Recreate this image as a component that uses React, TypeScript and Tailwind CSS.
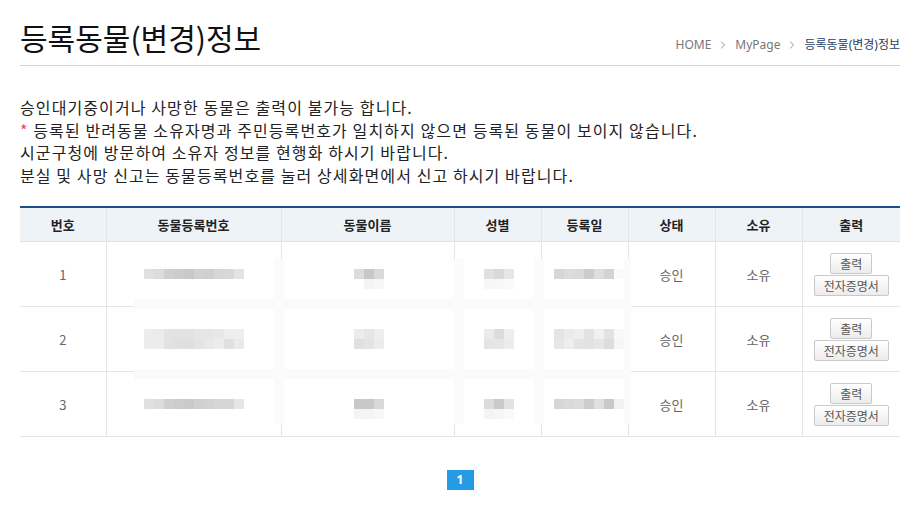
import { ChevronRight } from "lucide-react";

type Row = { no: number; status: string; owner: string };

const rows: Row[] = [
  { no: 1, status: "승인", owner: "소유" },
  { no: 2, status: "승인", owner: "소유" },
  { no: 3, status: "승인", owner: "소유" },
];

const headers = ["번호", "동물등록번호", "동물이름", "성별", "등록일", "상태", "소유", "출력"];

// mosaic that hides personal data (positions relative to the blur patch)
const blurBlocks: { x: number; y: number; cells: string[][] }[] = [
  { x: 10, y: 10, cells: [["#e0e0e0", "#dcdcdc", "#cfcfcf", "#cccccc", "#c8c8c8", "#d1d1d1", "#cfcfcf", "#d6d6d6", "#d8d8d8", "#e4e4e4"]] },
  { x: 220, y: 10, cells: [["#dcdcdc", "#c8c8c8", "#dadada"], ["#ffffff", "#f4f4f4", "#f6f6f6"]] },
  { x: 350, y: 10, cells: [["#e0e0e0", "#d9d9d9", "#e6e6e6"], ["#f7f7f7", "#f8f8f8", "#fafafa"]] },
  { x: 420, y: 10, cells: [["#d6d6d6", "#dcdcdc", "#dadada", "#cdcdcd", "#dedede", "#d3d3d3", "#fafafa"]] },

  {
    x: 10,
    y: 70,
    cells: [
      ["#ececec", "#ebebeb", "#e3e3e3", "#e2e2e2", "#e2e2e2", "#e6e6e6", "#e6e6e6", "#e8e8e8", "#eeeeee", "#eeeeee"],
      ["#ededed", "#ececec", "#e2e2e2", "#e0e0e0", "#dfdfdf", "#e4e4e4", "#e9e9e9", "#ececec", "#e0e0e0", "#eaeaea"],
    ],
  },
  { x: 220, y: 70, cells: [["#ececec", "#e6e6e6", "#eeeeee"], ["#e0e0e0", "#e4e4e4", "#ececec"]] },
  { x: 350, y: 70, cells: [["#ebebeb", "#dcdcdc", "#eeeeee"], ["#e4e4e4", "#e6e6e6", "#ececec"]] },
  {
    x: 420,
    y: 70,
    cells: [
      ["#e4e4e4", "#ebebeb", "#eeeeee", "#e2e2e2", "#f0f0f0", "#e2e2e2", "#f8f8f8"],
      ["#e6e6e6", "#eeeeee", "#e4e4e4", "#e2e2e2", "#e6e6e6", "#dddddd", "#f6f6f6"],
    ],
  },

  { x: 10, y: 140, cells: [["#e0e0e0", "#dddddd", "#cfcfcf", "#cdcdcd", "#c9c9c9", "#d0d0d0", "#d3d3d3", "#d6d6d6", "#d6d6d6", "#e6e6e6"]] },
  { x: 220, y: 140, cells: [["#c8c8c8", "#c8c8c8", "#d8d8d8"], ["#f4f4f4", "#f4f4f4", "#f8f8f8"]] },
  { x: 350, y: 140, cells: [["#dcdcdc", "#cacaca", "#e2e2e2"], ["#f4f4f4", "#f6f6f6", "#fafafa"]] },
  { x: 420, y: 140, cells: [["#d6d6d6", "#dadada", "#dcdcdc", "#cdcdcd", "#e0e0e0", "#c9c9c9", "#f2f2f2"]] },
];

function BlurPatch() {
  return (
    <div className="pointer-events-none absolute left-[114px] top-[53px] h-[165px] w-[497px] bg-white">
      <div className="absolute left-0 top-[40px] h-[10px] w-full bg-[#fafafa]" />
      <div className="absolute left-0 top-[110px] h-[10px] w-full bg-[#fafafa]" />
      <div className="absolute left-[140px] top-0 h-full w-[10px] bg-[#fbfbfb]" />
      <div className="absolute left-[320px] top-0 h-full w-[10px] bg-[#fbfbfb]" />
      <div className="absolute left-[400px] top-0 h-full w-[10px] bg-[#fbfbfb]" />
      <div className="absolute left-[490px] top-0 h-full w-[7px] bg-[#fbfbfb]" />
      {blurBlocks.map((b, i) => (
        <div key={i} className="absolute flex flex-col" style={{ left: b.x, top: b.y }}>
          {b.cells.map((line, j) => (
            <div key={j} className="flex">
              {line.map((c, k) => (
                <span key={k} className="block h-[10px] w-[10px]" style={{ backgroundColor: c }} />
              ))}
            </div>
          ))}
        </div>
      ))}
    </div>
  );
}

function SmallButton({ children }: { children: React.ReactNode }) {
  return (
    <button
      type="button"
      className="h-[21px] rounded-[2px] border border-[#c9c9c9] bg-gradient-to-b from-white to-[#ececec] px-[9px] text-[12px] leading-[19px] text-[#555]"
    >
      {children}
    </button>
  );
}

export default function App() {
  return (
    <div className="min-h-[521px] bg-white font-['Noto_Sans','Noto_Sans_CJK_KR',sans-serif] text-[#222]">
      <div className="ml-5 w-[880px]">
        <div className="flex items-end justify-between border-b border-[#d5d5d5] pb-[7px] pt-[17px]">
          <h1 className="font-['Noto_Sans_CJK_KR',sans-serif] text-[30px] leading-[41px] text-[#111]">
            등록동물(변경)정보
          </h1>
          <div className="mb-[4px] flex items-center gap-[6px] font-['Noto_Sans','Noto_Sans_CJK_KR',sans-serif] text-[12px] text-[#777]">
            <span>HOME</span>
            <ChevronRight size={12} strokeWidth={1.4} className="text-[#666]" />
            <span>MyPage</span>
            <ChevronRight size={12} strokeWidth={1.4} className="text-[#666]" />
            <span className="text-[#1f3f66]">등록동물(변경)정보</span>
          </div>
        </div>

        <div className="mt-[30px] font-['Noto_Sans_CJK_KR',sans-serif] text-[16px] leading-[22.7px] tracking-[1.1px] text-[#222]">
          <p>승인대기중이거나 사망한 동물은 출력이 불가능 합니다.</p>
          <p>
            <span className="text-[#e8465e]">*</span> 등록된 반려동물 소유자명과 주민등록번호가 일치하지 않으면 등록된 동물이 보이지 않습니다.
          </p>
          <p>시군구청에 방문하여 소유자 정보를 현행화 하시기 바랍니다.</p>
          <p>분실 및 사망 신고는 동물등록번호를 눌러 상세화면에서 신고 하시기 바랍니다.</p>
        </div>

        <div className="relative mt-[19px]">
          <table className="w-full table-fixed border-collapse border-t-2 border-t-[#1d4e89] font-['Noto_Sans_CJK_KR',sans-serif]">
            <colgroup>
              <col className="w-[86px]" />
              <col className="w-[175px]" />
              <col className="w-[173px]" />
              <col className="w-[87px]" />
              <col className="w-[87px]" />
              <col className="w-[87px]" />
              <col className="w-[87px]" />
              <col className="w-[98px]" />
            </colgroup>
            <thead>
              <tr className="h-[35px] border-b border-[#dfe4ea] bg-[#eef3f8]">
                {headers.map((h, i) => (
                  <th
                    key={h}
                    className={`text-[13px] font-bold text-[#222] ${i > 0 ? "border-l border-[#e1e6ec]" : ""}`}
                  >
                    {h}
                  </th>
                ))}
              </tr>
            </thead>
            <tbody>
              {rows.map((r) => (
                <tr key={r.no} className="h-[65px] border-b border-[#e5e5e5] text-center text-[13px] text-[#666]">
                  <td>{r.no}</td>
                  <td className="border-l border-[#e5e5e5]" />
                  <td className="border-l border-[#e5e5e5]" />
                  <td className="border-l border-[#e5e5e5]" />
                  <td className="border-l border-[#e5e5e5]" />
                  <td className="border-l border-[#e5e5e5]">{r.status}</td>
                  <td className="border-l border-[#e5e5e5]">{r.owner}</td>
                  <td className="border-l border-[#e5e5e5]">
                    <div className="flex flex-col items-center gap-px">
                      <SmallButton>출력</SmallButton>
                      <SmallButton>전자증명서</SmallButton>
                    </div>
                  </td>
                </tr>
              ))}
            </tbody>
          </table>
          <BlurPatch />
        </div>

        <div className="mt-[33px] flex justify-center">
          <span className="flex h-[20px] w-[27px] items-center justify-center bg-[#259be6] text-[12px] font-bold text-white">
            1
          </span>
        </div>
      </div>
    </div>
  );
}
